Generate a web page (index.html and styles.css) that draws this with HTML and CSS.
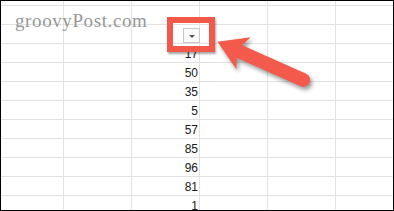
FILE: index.html
```html
<!DOCTYPE html>
<html>
<head>
<meta charset="utf-8">
<link rel="stylesheet" href="styles.css">
</head>
<body>
<div class="sheet">
  <div class="grid">
    <div class="c"></div><div class="c"></div><div class="c"></div><div class="c"></div><div class="c"></div><div class="c last"></div>
    <div class="c"></div><div class="c"></div><div class="c"></div><div class="c"></div><div class="c"></div><div class="c last"></div>
    <div class="c"></div><div class="c"></div><div class="c hdr"><span class="filter"><span class="tri"></span></span></div><div class="c"></div><div class="c"></div><div class="c last"></div>
    <div class="c"></div><div class="c"></div><div class="c num">17</div><div class="c"></div><div class="c"></div><div class="c last"></div>
    <div class="c"></div><div class="c"></div><div class="c num">50</div><div class="c"></div><div class="c"></div><div class="c last"></div>
    <div class="c"></div><div class="c"></div><div class="c num">35</div><div class="c"></div><div class="c"></div><div class="c last"></div>
    <div class="c"></div><div class="c"></div><div class="c num">5</div><div class="c"></div><div class="c"></div><div class="c last"></div>
    <div class="c"></div><div class="c"></div><div class="c num">57</div><div class="c"></div><div class="c"></div><div class="c last"></div>
    <div class="c"></div><div class="c"></div><div class="c num">85</div><div class="c"></div><div class="c"></div><div class="c last"></div>
    <div class="c"></div><div class="c"></div><div class="c num">96</div><div class="c"></div><div class="c"></div><div class="c last"></div>
    <div class="c"></div><div class="c"></div><div class="c num">81</div><div class="c"></div><div class="c"></div><div class="c last"></div>
    <div class="c"></div><div class="c"></div><div class="c num">1</div><div class="c"></div><div class="c"></div><div class="c last"></div>
  </div>
  <div class="watermark">groovyPost.com</div>
  <div class="highlight"></div>
  <svg class="arrow" width="394" height="211" viewBox="0 0 394 211">
    <g transform="translate(217.5 41.7) rotate(24)">
      <path d="M0 0 L28.5 -17.5 L24 -6.8 L94 -6.8 A6.8 6.8 0 0 1 94 6.8 L24 6.8 L28.5 17.5 Z" fill="#f45a4b"/>
    </g>
  </svg>
</div>
</body>
</html>
```

FILE: styles.css
```css
html, body {
  margin: 0;
  padding: 0;
  background: #ffffff;
}

.sheet {
  position: relative;
  width: 394px;
  height: 211px;
  box-sizing: border-box;
  border: 1px solid #000000;
  overflow: hidden;
  background: #ffffff;
}

.grid {
  display: grid;
  grid-template-columns: 63px 68px 68px 68px 68px 1fr;
  grid-template-rows: 5px repeat(11, 19px);
}

.c {
  box-sizing: border-box;
  border-right: 1px solid #e2e2e2;
  border-bottom: 1px solid #e2e2e2;
  min-width: 0;
  min-height: 0;
}

.c.last {
  border-right: none;
}

.num {
  display: flex;
  justify-content: flex-end;
  align-items: flex-end;
  padding: 0 1px 2px 0;
  font-family: "Liberation Sans", Arial, sans-serif;
  font-size: 12px;
  line-height: 12px;
  color: #1a1a1a;
}

.hdr {
  display: flex;
  justify-content: flex-end;
  align-items: flex-end;
}

.filter {
  box-sizing: border-box;
  width: 17px;
  height: 15px;
  margin-right: -1px;
  border: 1px solid #c9c9c9;
  background: #fafafa;
  display: flex;
  align-items: center;
  justify-content: center;
}

.tri {
  width: 0;
  height: 0;
  border-left: 3px solid transparent;
  border-right: 3px solid transparent;
  border-top: 3px solid #555555;
  margin-top: 1px;
}

.watermark {
  position: absolute;
  left: 14px;
  top: 10px;
  font-family: "Liberation Serif", "Times New Roman", serif;
  font-size: 19px;
  line-height: 19px;
  letter-spacing: 0.6px;
  color: #979797;
}

.highlight {
  position: absolute;
  left: 166px;
  top: 16px;
  width: 48px;
  height: 35px;
  box-sizing: border-box;
  border: 6px solid #f2594b;
  box-shadow: 1px 2px 2px rgba(0, 0, 0, 0.35);
}

.arrow {
  position: absolute;
  left: -1px;
  top: -1px;
  filter: drop-shadow(2px 3px 2px rgba(0, 0, 0, 0.4));
}
```
